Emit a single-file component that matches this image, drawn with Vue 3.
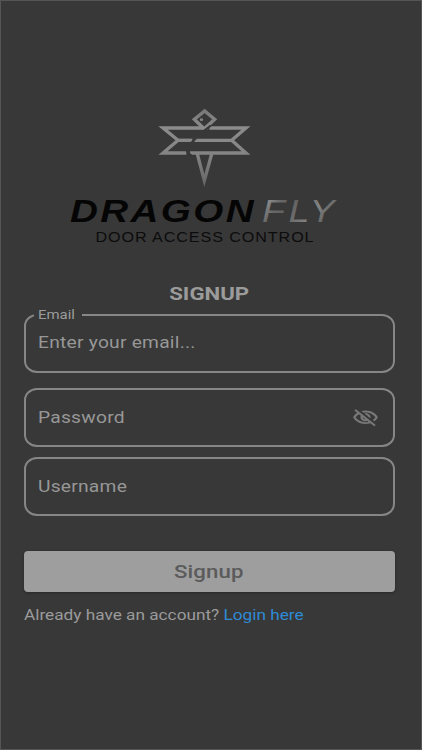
<script setup>
import { ref } from 'vue'

const email = ref('')
const password = ref('')
const username = ref('')
const showPassword = ref(false)
</script>

<template>
  <div class="signup-page">
    <!-- Logo -->
    <svg class="logo" width="280" height="145" viewBox="65 103 280 145">
      <defs>
        <linearGradient id="metal" x1="0" y1="40" x2="0" y2="270" gradientUnits="userSpaceOnUse">
          <stop offset="0" stop-color="#777" />
          <stop offset="0.25" stop-color="#8c8c8c" />
          <stop offset="0.6" stop-color="#848484" />
          <stop offset="1" stop-color="#666" />
        </linearGradient>
        <linearGradient id="fly" x1="0" y1="0" x2="1" y2="0.35">
          <stop offset="0" stop-color="#555" />
          <stop offset="0.14" stop-color="#8c8c8c" />
          <stop offset="0.3" stop-color="#666" />
          <stop offset="0.46" stop-color="#626262" />
          <stop offset="0.62" stop-color="#707070" />
          <stop offset="0.78" stop-color="#838383" />
          <stop offset="1" stop-color="#606060" />
        </linearGradient>
      </defs>
      <g transform="translate(140 95.3) scale(0.33333)" fill="none" stroke="url(#metal)" stroke-width="10">
        <path d="M203 98 L190 98 L163 72 L194 47 L224 72 L198 96" />
        <path d="M190 98 H69 L114 135 L69 173 H139" />
        <path d="M114 135 H157" />
        <path d="M208 98 H318 L275 135 L318 173 H150" />
        <path d="M163 135 H275" />
        <path d="M172 176 L193 256 L215 176" />
        <path d="M180 73 H189" stroke-width="7" />
        <path d="M153 143 L169 128 M139 166 L154 181 M193 106 L212 91" stroke="#383838" stroke-width="6" />
      </g>
      <text class="brand" x="70" y="221.500" textLength="186" lengthAdjust="spacingAndGlyphs">DRAGON</text>
      <text class="brand-light" x="262" y="221.500" textLength="76" lengthAdjust="spacingAndGlyphs" fill="url(#fly)">FLY</text>
      <text class="tagline" x="95.500" y="242" textLength="219" lengthAdjust="spacingAndGlyphs">DOOR ACCESS CONTROL</text>
    </svg>

    <h1 class="title"><span>SIGNUP</span></h1>

    <form class="form" @submit.prevent>
      <fieldset class="field email">
        <legend><span>Email</span></legend>
        <input v-model="email" type="email" placeholder="Enter your email..." />
      </fieldset>
      <div class="field password">
        <input v-model="password" :type="showPassword ? 'text' : 'password'" placeholder="Password" />
        <button type="button" class="eye" @click="showPassword = !showPassword">
          <svg width="27" height="21.5" viewBox="0 0 24 24" preserveAspectRatio="none">
            <path d="M12 6c3.790 0 7.170 2.130 8.820 5.500-.59 1.220-1.420 2.270-2.410 3.120l1.410 1.410c1.390-1.230 2.490-2.770 3.180-4.530C21.270 7.110 17 4 12 4c-1.270 0-2.490.2-3.640.57l1.650 1.650C10.660 6.090 11.320 6 12 6zm-1.070 1.140L13 9.210c.57.25 1.030.71 1.280 1.280l2.070 2.070c.08-.34.14-.7.14-1.070C16.500 9.010 14.480 7 12 7c-.37 0-.72.05-1.070.14zM2.010 3.870l2.680 2.680C3.060 7.830 1.770 9.530 1 11.500 2.730 15.890 7 19 12 19c1.520 0 2.980-.29 4.320-.82l3.420 3.420 1.410-1.410L3.420 2.450 2.010 3.870zm7.500 7.500l2.610 2.610c-.04.01-.08.02-.12.02-1.380 0-2.500-1.120-2.500-2.500 0-.05.01-.08.01-.13zm-3.400-3.400l1.750 1.750c-.23.55-.36 1.150-.36 1.780 0 2.480 2.020 4.500 4.500 4.500.63 0 1.230-.13 1.770-.36l.98.98c-.88.24-1.800.38-2.750.38-3.790 0-7.170-2.130-8.820-5.500.7-1.430 1.720-2.610 2.930-3.530z" />
          </svg>
        </button>
      </div>
      <div class="field username">
        <input v-model="username" type="text" placeholder="Username" />
      </div>
      <button type="submit" class="btn-signup"><span>Signup</span></button>
    </form>

    <p class="login-hint">
      <span>Already have an account? <a href="#">Login here</a></span>
    </p>
  </div>
</template>

<style>
body { background: #383838; }
</style>

<style scoped>
.signup-page {
  box-sizing: border-box;
  height: 750px;
  padding: 102px 26px 0 22.5px;
  border: 1px solid #555;
  background: #383838;
  color: #9b9b9b;
  font-family: Roboto, "Liberation Sans", sans-serif;
  overflow: hidden;
}

.logo {
  display: block;
  margin-left: 41.5px;
}

.brand,
.brand-light,
.tagline { font-family: "Liberation Sans", Arial, sans-serif; }
.brand { font-size: 32px; font-weight: 700; font-style: italic; fill: #050505; letter-spacing: 2px; }
.brand-light { font-size: 32px; font-style: italic; letter-spacing: 3px; }
.tagline { font-size: 14px; fill: #0c0c0c; letter-spacing: 0.8px; }

.title {
  margin: 33px 0 0;
  height: 25px;
  line-height: 25px;
  font-size: 19px;
  font-weight: 700;
  text-align: center;
}

.title span,
.btn-signup span {
  display: inline-block;
  transform: scaleX(1.17);
}

.form {
  display: flex;
  flex-direction: column;
}

.field {
  box-sizing: border-box;
  display: flex;
  align-items: center;
  justify-content: space-between;
  height: 59px;
  margin: 0;
  padding: 0 14.5px 0 12.5px;
  border: 2px solid #868686;
  border-radius: 13px / 12px;
}

.field.email {
  display: block;
  height: 66px;
  margin-top: 1px;
  padding: 0 15px 0 8px;
}

.field.email legend {
  width: 48px;
  height: 16px;
  padding: 0;
  box-sizing: border-box;
  font-size: 13px;
  line-height: 16px;
  white-space: nowrap;
}

.field.email legend span {
  display: inline-block;
  margin-left: 4.5px;
  transform: scaleX(1.15);
  transform-origin: left;
}

.field.email input {
  margin: 7px 0 0 4.5px;
}

.field.password { margin-top: 15px; }
.field.username { margin-top: 10px; }

.field input {
  width: 230px;
  height: 24px;
  padding: 0;
  border: none;
  outline: none;
  background: none;
  color: #9b9b9b;
  font: 400 16.5px Roboto, "Liberation Sans", sans-serif;
  letter-spacing: 0.2px;
  transform: scaleX(1.165);
  transform-origin: left;
}

.field input::placeholder { color: #979797; opacity: 1; }

.eye {
  display: flex;
  padding: 0;
  border: none;
  background: none;
  cursor: pointer;
}

.eye path { fill: #797979; }

.btn-signup {
  height: 41px;
  margin: 35px 0 0;
  padding: 0;
  border: none;
  border-radius: 4px;
  background: #9e9e9e;
  box-shadow: 0 1px 3px rgba(0, 0, 0, 0.3);
  color: #5b5b5b;
  font: 500 19px Roboto, "Liberation Sans", sans-serif;
  letter-spacing: 0.1px;
  cursor: pointer;
}

.login-hint {
  margin: 13px 0 0;
  font-size: 15px;
  line-height: 20px;
  white-space: nowrap;
}

.login-hint span {
  display: inline-block;
  transform: scaleX(1.148);
  transform-origin: left;
}

.login-hint a {
  color: #2f8ad6;
  text-decoration: none;
}
</style>
